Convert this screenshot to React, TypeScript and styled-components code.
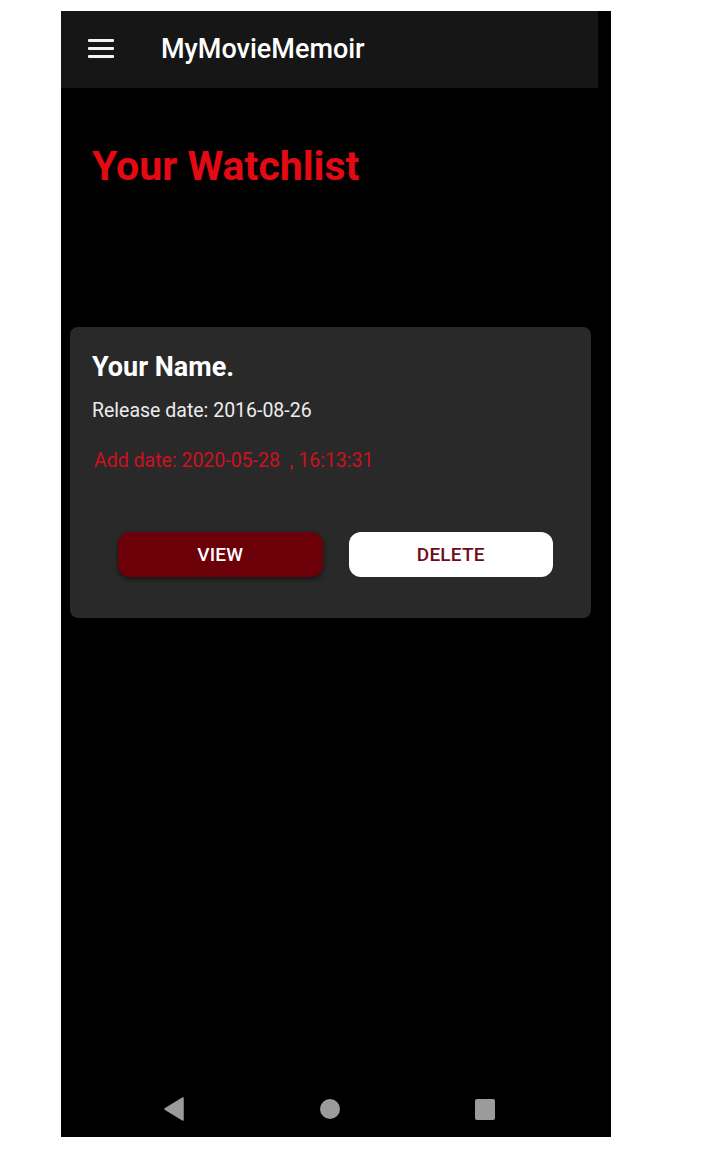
import React from "react";
import styled, { createGlobalStyle } from "styled-components";

const GlobalStyle = createGlobalStyle`
  html, body {
    margin: 0;
    padding: 0;
    background: #ffffff;
  }
  body {
    font-family: Roboto, "Noto Sans", "Liberation Sans", sans-serif;
  }
`;

const Page = styled.div`
  padding: 11px 0 0 61px;
`;

const Phone = styled.div`
  width: 550px;
  height: 1126px;
  background: #000000;
  display: flex;
  flex-direction: column;
`;

const AppBar = styled.header`
  width: 537px;
  height: 77px;
  background: #161616;
  display: flex;
  align-items: center;
  padding-left: 27px;
  box-sizing: border-box;
  gap: 47px;
`;

const MenuButton = styled.div`
  width: 26px;
  height: 19px;
  display: flex;
  flex-direction: column;
  justify-content: space-between;
  margin-top: -2px;
`;

const MenuLine = styled.span`
  display: block;
  height: 3px;
  background: #f2f2f2;
  border-radius: 1px;
`;

const AppTitle = styled.h1`
  margin: 0;
  font-family: Roboto, sans-serif;
  font-weight: 500;
  font-size: 27px;
  line-height: 32px;
  color: #ffffff;
  margin-top: -2px;
`;

const Main = styled.main`
  flex: 1;
  display: flex;
  flex-direction: column;
`;

const Heading = styled.h2`
  margin: 54px 0 0 31px;
  font-family: Roboto, sans-serif;
  font-weight: 700;
  font-size: 41px;
  line-height: 48px;
  color: #e50914;
`;

const Card = styled.section`
  margin: 137px 0 0 9px;
  width: 521px;
  background: #292929;
  border-radius: 8px;
  padding: 24px 38px 41px 22px;
  box-sizing: border-box;
  display: flex;
  flex-direction: column;
`;

const MovieTitle = styled.h3`
  margin: 0;
  font-family: Roboto, sans-serif;
  font-weight: 700;
  font-size: 27px;
  line-height: 32px;
  color: #ffffff;
`;

const InfoLine = styled.p<{ $accent?: boolean }>`
  margin: ${(p) => (p.$accent ? "26px 0 0 2px" : "16px 0 0 0")};
  font-family: Roboto, sans-serif;
  font-weight: 400;
  font-size: 19.5px;
  line-height: 24px;
  color: ${(p) => (p.$accent ? "#cf1020" : "#ececec")};
  white-space: pre;
`;

const Actions = styled.div`
  margin-top: 59px;
  padding-left: 26px;
  display: flex;
  gap: 26px;
`;

const ActionButton = styled.button<{ $variant: "primary" | "light" }>`
  flex: 1;
  height: 45px;
  border: none;
  border-radius: 12px;
  font-family: Roboto, sans-serif;
  font-weight: 500;
  font-size: 19px;
  letter-spacing: 0.2px;
  background: ${(p) => (p.$variant === "primary" ? "#6b0008" : "#ffffff")};
  color: ${(p) => (p.$variant === "primary" ? "#ffffff" : "#6e0b1a")};
  box-shadow: ${(p) =>
    p.$variant === "primary" ? "0 2px 5px rgba(0, 0, 0, 0.55)" : "none"};
  cursor: pointer;
`;

const NavBar = styled.nav`
  height: 56px;
  display: grid;
  grid-template-columns: 156px 156px 156px;
  padding-left: 35px;
  align-items: center;
`;

const NavCell = styled.div`
  display: flex;
  justify-content: center;
  align-items: center;
`;

const NavCircle = styled.span`
  width: 20px;
  height: 20px;
  border-radius: 50%;
  background: #9b9b9b;
`;

const NavSquare = styled.span`
  width: 20px;
  height: 21px;
  border-radius: 2px;
  background: #9b9b9b;
  margin-left: -3px;
`;

export default function App() {
  return (
    <>
      <GlobalStyle />
      <Page>
        <Phone>
          <AppBar>
            <MenuButton>
              <MenuLine />
              <MenuLine />
              <MenuLine />
            </MenuButton>
            <AppTitle>MyMovieMemoir</AppTitle>
          </AppBar>
          <Main>
            <Heading>Your Watchlist</Heading>
            <Card>
              <MovieTitle>Your Name.</MovieTitle>
              <InfoLine>Release date: 2016-08-26</InfoLine>
              <InfoLine $accent>Add date: 2020-05-28  , 16:13:31</InfoLine>
              <Actions>
                <ActionButton $variant="primary">VIEW</ActionButton>
                <ActionButton $variant="light">DELETE</ActionButton>
              </Actions>
            </Card>
          </Main>
          <NavBar>
            <NavCell>
              <svg width="20" height="24" viewBox="0 0 20 24">
                <path d="M19 1 L19 23 L1 12 Z" fill="#9b9b9b" stroke="#9b9b9b" strokeWidth="1.5" strokeLinejoin="round" />
              </svg>
            </NavCell>
            <NavCell>
              <NavCircle />
            </NavCell>
            <NavCell>
              <NavSquare />
            </NavCell>
          </NavBar>
        </Phone>
      </Page>
    </>
  );
}
